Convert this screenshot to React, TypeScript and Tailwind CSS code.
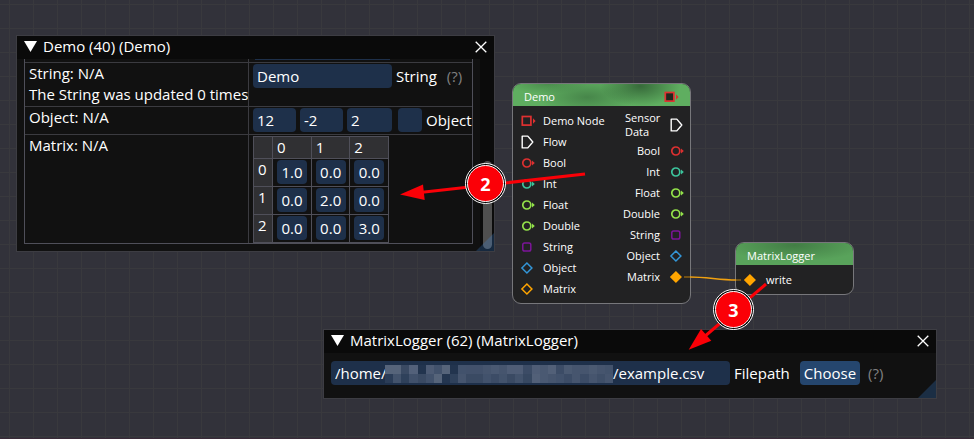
import type { ReactNode } from "react";

const FIELD =
  "h-6 rounded bg-[#1e304a] px-1 text-[15px] leading-[24px] text-white outline-none";

type PinKind = "square" | "flow" | "circle" | "round" | "diamond";

function Pin({ kind, color, filled = false }: { kind: PinKind; color: string; filled?: boolean }) {
  const arrow = <path d="M14 6.5 L16.8 9 L14 11.5 Z" fill={color} stroke="none" />;
  return (
    <svg viewBox="0 0 18 18" className="size-[18px] shrink-0" fill="none" stroke={color} strokeWidth="1.7">
      {kind === "square" && (
        <>
          <rect x="4.3" y="4.5" width="8.6" height="8.6" fill={filled ? "#20281f" : "none"} />
          <path d="M15 6.3 L17.6 9 L15 11.7 Z" fill={color} stroke="none" />
        </>
      )}
      {kind === "flow" && <path d="M4.2 3.1 H9.8 L14.8 9 L9.8 14.9 H4.2 Z" strokeLinejoin="round" strokeWidth="1.4" />}
      {kind === "circle" && (
        <>
          <circle cx="8.8" cy="9" r="4" />
          {arrow}
        </>
      )}
      {kind === "round" && <rect x="4.8" y="5" width="8" height="8" rx="1.8" strokeWidth="1.5" />}
      {kind === "diamond" && (
        <path d="M8.9 4 L13.9 9 L8.9 14 L3.9 9 Z" fill={filled ? color : "none"} strokeWidth="1.5" />
      )}
    </svg>
  );
}

const inputs: { label: string; kind: PinKind; color: string }[] = [
  { label: "Demo Node", kind: "square", color: "#e03131" },
  { label: "Flow", kind: "flow", color: "#ffffff" },
  { label: "Bool", kind: "circle", color: "#dc3030" },
  { label: "Int", kind: "circle", color: "#3cc49c" },
  { label: "Float", kind: "circle", color: "#93e24a" },
  { label: "Double", kind: "circle", color: "#93e24a" },
  { label: "String", kind: "round", color: "#7c1599" },
  { label: "Object", kind: "diamond", color: "#3396d7" },
  { label: "Matrix", kind: "diamond", color: "#ffa500" },
];

const outputs = inputs.slice(2);

const matrix = [
  ["1.0", "0.0", "0.0"],
  ["0.0", "2.0", "0.0"],
  ["0.0", "0.0", "3.0"],
];

const maskTop = [
  "bg-[#56647a]", "bg-[#56647a]", "bg-[#3a4a63]", "bg-[#53617a]", "bg-[#22344e]", "bg-[#4d5b74]", "bg-[#42526c]",
  "bg-[#56647a]", "bg-[#22344e]", "bg-[#42526c]", "bg-[#42516b]", "bg-[#42516b]", "bg-[#46556e]", "bg-[#4a5972]",
  "bg-[#46556e]", "bg-[#4f5d76]", "bg-[#4f5d76]", "bg-[#3c4c66]", "bg-[#4f5d76]", "bg-[#4a5972]", "bg-[#526078]",
  "bg-[#3c4c66]", "bg-[#4b5a72]", "bg-[#46556e]", "bg-[#46556e]", "bg-[#4b5a72]", "bg-[#46556e]", "bg-[#43536c]",
];
const maskBottom = [
  "bg-[#2b3d58]", "bg-[#43536c]", "bg-[#2f415b]", "bg-[#41516b]", "bg-[#3a4a63]", "bg-[#42526c]", "bg-[#56647a]",
  "bg-[#243650]", "bg-[#2f415b]", "bg-[#46556e]", "bg-[#3a4a63]", "bg-[#3a4a63]", "bg-[#42526c]", "bg-[#3c4c66]",
  "bg-[#43536c]", "bg-[#3a4a63]", "bg-[#43536c]", "bg-[#374861]", "bg-[#526078]", "bg-[#4a5972]", "bg-[#46556e]",
  "bg-[#42526c]", "bg-[#3c4c66]", "bg-[#46556e]", "bg-[#3c4c66]", "bg-[#46556e]", "bg-[#3f4f68]", "bg-[#46556e]",
];

function ToolWindow({ title, place, children }: { title: string; place: string; children: ReactNode }) {
  return (
    <section className={"absolute flex flex-col overflow-hidden border border-[#3d3d43] bg-[#111111] " + place}>
      <header className="flex h-[23px] shrink-0 items-center gap-1.5 bg-[#0a0a0a] px-[7px] pb-0.5">
        <button type="button" aria-label="Collapse">
          <svg viewBox="0 0 13 11" className="h-[11px] w-[13px]">
            <path d="M0 0 H13 L6.5 11 Z" fill="#fff" />
          </svg>
        </button>
        <h2 className="grow text-[15px] leading-[21px]">{title}</h2>
        <button type="button" aria-label="Close">
          <svg viewBox="0 0 12 12" className="size-3" stroke="#fff" strokeWidth="1.3">
            <path d="M0.7 0.7 L11.3 11.3 M11.3 0.7 L0.7 11.3" />
          </svg>
        </button>
      </header>
      {children}
      <svg viewBox="0 0 18 18" className="absolute right-0 bottom-0 size-[18px]">
        <path d="M18 0 V18 H0 Z" fill="#4296fa" fillOpacity="0.22" />
      </svg>
    </section>
  );
}

function GraphNode({ title, place, tone, pin, children }: { title: string; place: string; tone: string; pin?: ReactNode; children: ReactNode }) {
  return (
    <article className={"absolute overflow-hidden rounded-[9px] border border-[#77777b] bg-[#222223] text-[11px] leading-[14px] " + place}>
      <header className={"flex h-[22px] items-center justify-between pt-1 pr-[11px] pl-[11px] " + tone}>
        <h3>{title}</h3>
        {pin}
      </header>
      {children}
    </article>
  );
}

function Badge({ place, children }: { place: string; children: ReactNode }) {
  return (
    <span className={"absolute flex size-[41px] items-center justify-center rounded-full border border-white bg-black p-px " + place}>
      <span className="flex size-full items-center justify-center rounded-full border border-white bg-[#fb0007] text-[18px] leading-none font-bold">
        {children}
      </span>
    </span>
  );
}

export default function App() {
  return (
    <main className="relative h-screen min-h-[400px] w-full overflow-hidden border-b border-[#3a2a38] bg-[#32323a] bg-[linear-gradient(to_right,#39393d_1px,transparent_1px),linear-gradient(to_bottom,#39393d_1px,transparent_1px)] bg-size-[24px_24px] bg-position-[9px_4px] font-['Open_Sans','Noto_Sans',sans-serif] text-white">
      <ToolWindow title="Demo (40) (Demo)" place="top-[35px] left-4 h-[217px] w-[479px]">
        <div className="flex min-h-0 grow">
          <div className="grow px-[7px]">
            <table className="w-[449px] table-fixed border-separate border-spacing-0 border-x border-b border-[#4f4f59] text-[15px] leading-[21px]">
              <colgroup>
                <col className="w-[223px]" />
                <col />
              </colgroup>
              <tbody>
                <tr>
                  <td className="h-[3px] p-0" />
                  <td className="h-[3px] border-l border-[#3b3b40] p-0 px-1 align-top">
                    <div className="h-px w-[139px] px-0.5">
                      <div className="h-full bg-[#1e304a]" />
                    </div>
                  </td>
                </tr>
                <tr>
                  <td className="h-11 overflow-hidden border-t border-[#3b3b40] p-0 pl-1 align-top whitespace-nowrap">
                    <p>String: N/A</p>
                    <p>The String was updated 0 times</p>
                  </td>
                  <td className="border-t border-l border-[#3b3b40] p-0 pt-px pl-1 align-top">
                    <div className="flex items-center">
                      <input id="string" defaultValue="Demo" className={FIELD + " w-[139px]"} />
                      <label htmlFor="string" className="ml-1">String</label>
                      <span className="ml-2.5 text-[#808080]">(?)</span>
                    </div>
                  </td>
                </tr>
                <tr>
                  <td className="h-7 border-t border-[#3b3b40] p-0 pl-1 align-top">Object: N/A</td>
                  <td className="overflow-hidden border-t border-l border-[#3b3b40] p-0 pt-px pl-1 align-top">
                    <div className="flex items-center gap-1">
                      <input aria-label="Object value 1" defaultValue="12" className={FIELD + " w-[43px]"} />
                      <input aria-label="Object value 2" defaultValue="-2" className={FIELD + " w-[43px]"} />
                      <input aria-label="Object value 3" defaultValue="2" className={FIELD + " w-[45px]"} />
                      <input id="object" type="checkbox" className="ml-0.5 size-6 shrink-0 appearance-none rounded bg-[#1e304a]" />
                      <label htmlFor="object">Object</label>
                    </div>
                  </td>
                </tr>
                <tr>
                  <td className="h-[109px] border-t border-[#3b3b40] p-0 pl-1 align-top">Matrix: N/A</td>
                  <td className="border-t border-l border-[#3b3b40] p-0 pt-px pl-1 align-top">
                    <table className="w-[136px] table-fixed border-separate border-spacing-0 border-r border-b border-[#4f4f59]">
                      <thead className="bg-[#303033]">
                        <tr>
                          <td className="h-[22px] w-[19px] border-t border-l border-[#4f4f59] p-0" />
                          {["0", "1", "2"].map((c) => (
                            <th key={c} scope="col" className="h-[22px] border-t border-l border-[#4f4f59] p-0 pl-1 text-left leading-[21px] font-normal">
                              {c}
                            </th>
                          ))}
                        </tr>
                      </thead>
                      <tbody>
                        {matrix.map((row, r) => (
                          <tr key={r}>
                            <th scope="row" className="h-7 border-t border-l border-[#4f4f59] bg-[#303033] p-0 pl-1 text-left align-top font-normal">
                              {r}
                            </th>
                            {row.map((value, c) => (
                              <td key={c} className="border-t border-l border-[#4f4f59] p-0 px-1 pt-px align-top">
                                <input aria-label={`Row ${r}, column ${c}`} defaultValue={value} className="block h-6 w-[30px] rounded bg-[#1e304a] text-center leading-[24px] outline-none" />
                              </td>
                            ))}
                          </tr>
                        ))}
                      </tbody>
                    </table>
                  </td>
                </tr>
              </tbody>
            </table>
          </div>
          <div className="flex w-[14px] shrink-0 flex-col justify-end bg-[#0b0b0b] pr-0.5 pb-0.5 pl-[3px]">
            <div className="h-[88px] rounded-full bg-[#4f4f4f]" />
          </div>
        </div>
      </ToolWindow>

      <GraphNode
        title="Demo"
        place="top-[83px] left-[512px] h-[221px] w-[179px]"
        tone="bg-[#5fae60] bg-[radial-gradient(40px_20px_at_72%_10%,#376a3a_0%,transparent_100%),radial-gradient(50px_18px_at_42%_60%,#47864a_0%,transparent_100%),radial-gradient(40px_10px_at_20%_0%,#4b8d4d_0%,transparent_100%)]"
        pin={<Pin kind="square" color="#e03131" filled />}
      >
        <div className="flex justify-between px-[5px] pt-1">
          <ul>
            {inputs.map((p) => (
              <li key={p.label} className="flex h-[21px] items-center gap-[7px]">
                <Pin kind={p.kind} color={p.color} />
                {p.label}
              </li>
            ))}
          </ul>
          <ul>
            <li className="flex h-[30px] items-center justify-end gap-1.5">
              <span className="w-9">Sensor Data</span>
              <Pin kind="flow" color="#ffffff" />
            </li>
            {outputs.map((p) => (
              <li key={p.label} className="flex h-[21px] items-center justify-end gap-[7px]">
                {p.label}
                <Pin kind={p.kind} color={p.color} filled={p.label === "Matrix"} />
              </li>
            ))}
          </ul>
        </div>
      </GraphNode>

      <GraphNode
        title="MatrixLogger"
        place="top-[242px] left-[735px] h-[53px] w-[119px]"
        tone="bg-[#59a35b] bg-[radial-gradient(70px_16px_at_50%_10%,#427d45_0%,transparent_100%)]"
      >
        <div className="flex h-7 items-center gap-[7px] pt-0.5 pl-[5px]">
          <Pin kind="diamond" color="#ffa500" filled />
          write
        </div>
      </GraphNode>

      <svg className="absolute inset-0 size-full" fill="none">
        <path d="M690 277 C706 277 720 280 736 280" stroke="#f0a010" strokeWidth="1.6" />
        <path d="M684 277 H690 M736 280 H741" stroke="#8a6013" strokeWidth="1.4" />
      </svg>

      <ToolWindow title="MatrixLogger (62) (MatrixLogger)" place="top-[329px] left-[323px] h-[70px] w-[614px]">
        <div className="flex items-center px-[7px] pt-2 text-[15px] leading-[22px]">
          <div className="flex h-6 w-[399px] items-center rounded bg-[#1e304a] pl-1">
            <input id="filepath" defaultValue="/home/" className="w-[50px] leading-[24px] outline-none" />
            <div className="grid w-[228px] grid-cols-[repeat(28,minmax(0,1fr))] pt-0.5">
              {maskTop.concat(maskBottom).map((tone, i) => (
                <i key={i} className={"h-[9px] " + tone} />
              ))}
            </div>
            <input aria-label="File name" defaultValue="/example.csv" className="min-w-0 flex-1 leading-[24px] outline-none" />
          </div>
          <label htmlFor="filepath" className="ml-1 w-[66px]">Filepath</label>
          <button type="button" className="h-6 w-[60px] rounded bg-[#25466e]">Choose</button>
          <span className="ml-2 text-[#808080]">(?)</span>
        </div>
      </ToolWindow>

      <svg className="absolute inset-0 size-full" stroke="#fb0007" fill="#fb0007">
        <path d="M585 174 L420 192.5" strokeWidth="3" />
        <path d="M400 194.5 L423 184.5 L424.7 200 Z" stroke="none" />
        <path d="M766 284 L704 337" strokeWidth="3" />
        <path d="M688.7 349.7 L701 329 L711.3 340.7 Z" stroke="none" />
      </svg>
      <Badge place="top-[163px] left-[465px]">2</Badge>
      <Badge place="top-[289px] left-[713px]">3</Badge>
    </main>
  );
}
